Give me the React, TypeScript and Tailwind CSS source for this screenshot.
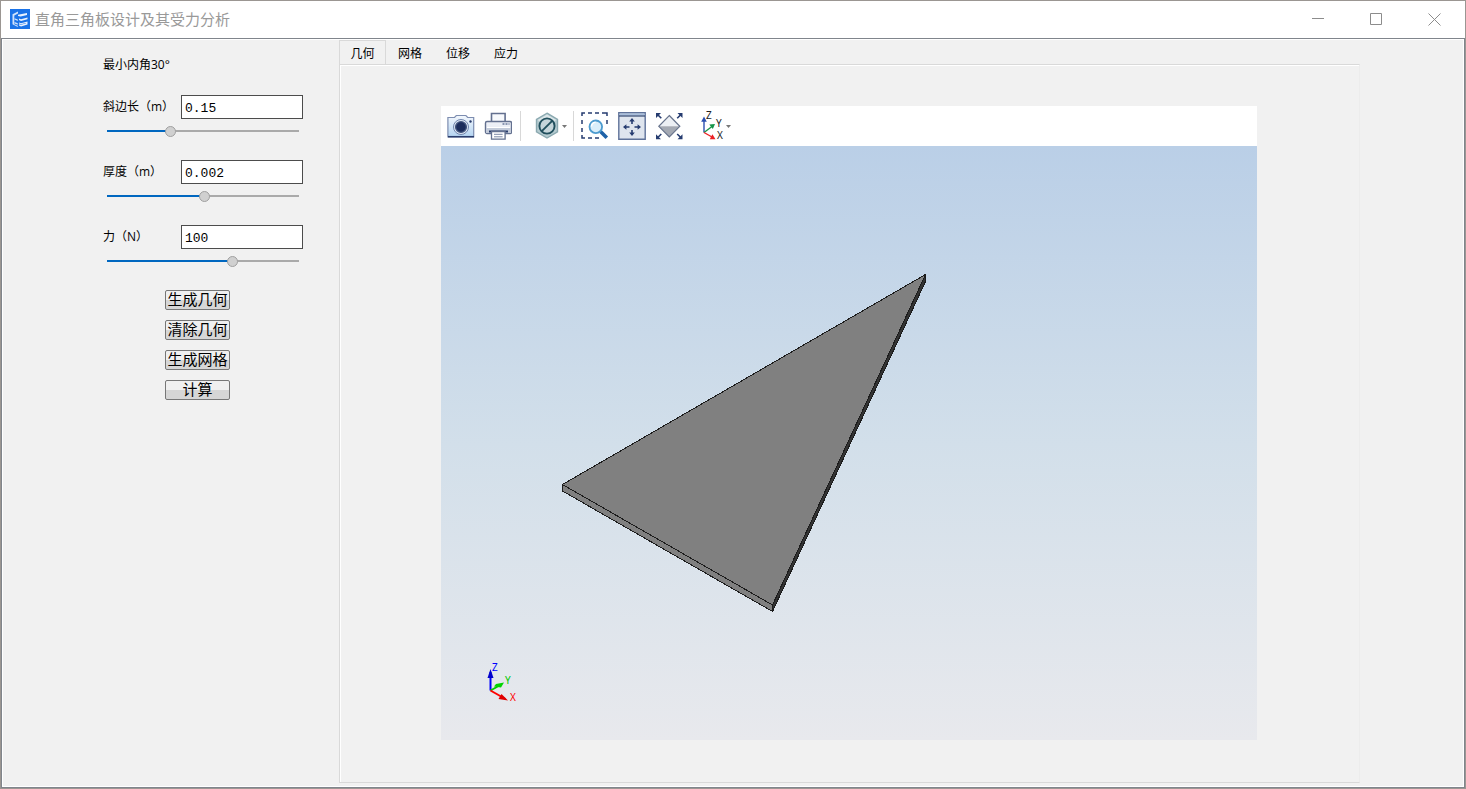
import { useState } from "react";

type Param = {
  id: string;
  label: string;
  value: string;
  min: number;
  max: number;
};

const initialParams: Param[] = [
  { id: "length", label: "斜边长（m）", value: "0.15", min: 0.05, max: 0.36 },
  { id: "thickness", label: "厚度（m）", value: "0.002", min: 0.0005, max: 0.00345 },
  { id: "force", label: "力（N）", value: "100", min: 0, max: 151 },
];

const actions = ["生成几何", "清除几何", "生成网格", "计算"];
const tabs = ["几何", "网格", "位移", "应力"];

function AppLogo() {
  return (
    <svg width="20" height="20" viewBox="0 0 20 20" aria-hidden="true">
      <rect width="20" height="20" fill="#1a73e8" />
      <path d="M2.5 5.2 8 2.4v2.2L4.3 6.4v8.8l3.5 1.6v1.3l-5.3-2.8z" fill="#cfe2fb" />
      <path d="m4.5 9.2 3.3 1.3v1.4l-3.3-1.3zm0 3.8 3.3 1.3v1.4l-3.3-1.3z" fill="#cfe2fb" />
      <path d="m8 5.8 9-1.9v2.2l-6.3 1.5L8 6.9z" fill="#e9f2fe" />
      <path d="m9 9.4 2 .8 6.5-1.7v1.7L11 12l-2-.9zm0 4 2 .8 6.5-1.8v3.2L11 17.4l-2-.9v-1.3l2 .6 4.8-1.3v-.6L11 15.3l-2-.7z" fill="#e9f2fe" />
    </svg>
  );
}

function CameraIcon() {
  return (
    <svg width="28" height="28" viewBox="0 0 28 28" aria-hidden="true">
      <defs>
        <linearGradient id="cameraBody" x1="0" y1="0" x2="0" y2="1">
          <stop offset="0" stopColor="#f4f8fd" />
          <stop offset="1" stopColor="#b3d3f1" />
        </linearGradient>
      </defs>
      <path d="M1.5 5.5h6l1.8-2h9.6l1.8 2h6v19.3H.9V5.5z" fill="url(#cameraBody)" stroke="#7d8db0" strokeWidth="1.2" />
      <path d="M1 24.7h26" stroke="#293c6c" strokeWidth="1.5" />
      <circle cx="14" cy="15" r="7.5" fill="#dfe8f4" stroke="#7185ad" />
      <circle cx="14" cy="15" r="5.4" fill="#1c2d5c" stroke="#44577f" strokeWidth="1.4" />
      <circle cx="23.5" cy="9.5" r="1.2" fill="#293c6c" />
    </svg>
  );
}

function PrinterIcon() {
  return (
    <svg width="28" height="28" viewBox="0 0 28 28" aria-hidden="true">
      <path d="M7.5 10V1.5h13.6V10" fill="#f7f9fc" stroke="#63708f" strokeWidth="1.6" />
      <rect x="1.5" y="9.5" width="26" height="12" rx="1.5" fill="#eceff6" stroke="#63708f" strokeWidth="1.4" />
      <path d="M2 16h25v5H2z" fill="#c3cbda" />
      <path d="M3 15.5h23" stroke="#fff" />
      <path d="M18.5 12h7" stroke="#293c6c" strokeDasharray="2 1" />
      <path d="M5 19.5h19" stroke="#293c6c" strokeWidth="2" />
      <path d="M7.5 19.5h13.6v7.7H7.5z" fill="#fff" stroke="#63708f" strokeWidth="1.3" />
      <path d="M10 22.3h8.6M10 24.8h8.6" stroke="#7c89a5" />
    </svg>
  );
}

function HexagonIcon() {
  return (
    <svg width="28" height="28" viewBox="0 0 28 28" aria-hidden="true">
      <path d="m14 1.2 10.5 6.2v12.4L14 26 3.5 19.8V7.4z" fill="#b5cbd0" stroke="#8ba9b0" strokeWidth="1.4" />
      <path d="m14 2.5 9.4 5.5L14 13.6 4.6 8z" fill="#dbe6e9" />
      <circle cx="14" cy="14" r="7.6" fill="#c5d5da" stroke="#214f5d" strokeWidth="1.9" />
      <path d="m8.8 19.2 10.4-10.4" stroke="#214f5d" strokeWidth="1.9" />
    </svg>
  );
}

function ZoomBoxIcon() {
  return (
    <svg width="28" height="28" viewBox="0 0 28 28" aria-hidden="true">
      <path
        d="M1 4V1h3m3 0h4m3 0h4m3 0h5v3M1 8v4m0 4v4m0 3v3h3m3 0h4m3 0h4M26 8v4"
        fill="none"
        stroke="#263c70"
        strokeWidth="1.5"
      />
      <path d="m19.5 19.5 6.3 6.3" stroke="#1e62a8" strokeWidth="3.6" />
      <circle cx="14.8" cy="14.8" r="6.3" fill="#d9eefa" stroke="#4c9bcf" strokeWidth="1.8" />
      <path d="M10.5 14.5a4.5 4.5 0 0 1 4-4.3" fill="none" stroke="#fff" strokeWidth="1.5" />
    </svg>
  );
}

function FitViewIcon() {
  return (
    <svg width="28" height="28" viewBox="0 0 28 28" aria-hidden="true">
      <path d="M.8.8h26.4v26.4H.8z" fill="#dfe5ee" stroke="#5f7299" strokeWidth="1.4" />
      <path d="M1.5 1.5h25v2h-25z" fill="#a9bedb" />
      <path d="M1 4h26" stroke="#31466f" strokeWidth="1.2" />
      <path d="M14 12V8.5m0 9.5v3.5M11.5 15H8m8.5 0H20" stroke="#263c70" strokeWidth="1.6" />
      <path d="m14 6 2.8 3.4h-5.6zm0 18 2.8-3.4h-5.6zM5 15l3.4-2.8v5.6zm18 0-3.4-2.8v5.6z" fill="#263c70" />
    </svg>
  );
}

function ExtentsIcon() {
  return (
    <svg width="28" height="28" viewBox="0 0 28 28" aria-hidden="true">
      <path d="m14.3 3.5 10.5 10.8H3.8z" fill="#eceff4" />
      <path d="M3.8 14.3h21L14.3 25z" fill="#a4a9b3" />
      <path d="m14.3 3.5 10.5 10.8L14.3 25 3.8 14.3z" fill="none" stroke="#67738c" strokeWidth="1.2" />
      <path d="m2 2 4.3 4.3M26.5 2l-4.3 4.3M2 26.3 6.3 22m20.2 4.3L22.2 22" stroke="#263c70" strokeWidth="1.6" />
      <path d="M1 1h5L1 6zm26.5 0h-5l5 5zM1 27.3h5l-5-5zm26.5 0h-5l5-5z" fill="#263c70" />
    </svg>
  );
}

function AxesIcon() {
  return (
    <svg width="24" height="38" viewBox="0 -3 24 38" aria-hidden="true" className="font-['Noto_Sans',sans-serif] text-[10px]">
      <path d="M3 22.5V10" stroke="#2b4fb0" strokeWidth="1.4" />
      <path d="m3 6.5 2.8 5.2H.2z" fill="#2b4fb0" />
      <path d="m3 22.5 8-6" stroke="#159447" strokeWidth="1.4" />
      <path d="m14 14-2.2 5-3.5-4.5z" fill="#159447" />
      <path d="m3 22.5 8 4.5" stroke="#ed2024" strokeWidth="1.4" />
      <path d="M14.5 29.3H8.8l2.6-5z" fill="#ed2024" />
      <text x="5" y="9" fill="#222">Z</text>
      <text x="15" y="17" fill="#222">Y</text>
      <text x="16" y="29" fill="#222">X</text>
    </svg>
  );
}

function Caret() {
  return (
    <svg width="5" height="3" viewBox="0 0 5 3" aria-hidden="true">
      <path d="M0 0h5L2.5 3z" fill="#777" />
    </svg>
  );
}

function Toolbar() {
  return (
    <div className="flex h-10 items-center bg-white pl-[6px]" role="toolbar">
      <div className="flex gap-[9px]">
        <button type="button" aria-label="截图"><CameraIcon /></button>
        <button type="button" aria-label="打印"><PrinterIcon /></button>
      </div>
      <div className="mx-2 h-[30px] w-px bg-[#d8d8d8]" />
      <button type="button" aria-label="显示" className="ml-1 flex items-center gap-px">
        <HexagonIcon />
        <Caret />
      </button>
      <div className="mr-[7px] ml-[6px] h-[30px] w-px bg-[#d8d8d8]" />
      <div className="flex gap-[9px]">
        <button type="button" aria-label="框选缩放"><ZoomBoxIcon /></button>
        <button type="button" aria-label="适应窗口"><FitViewIcon /></button>
        <button type="button" aria-label="缩放到范围"><ExtentsIcon /></button>
      </div>
      <button type="button" aria-label="视图方向" className="ml-[18px] flex items-center gap-px">
        <AxesIcon />
        <Caret />
      </button>
    </div>
  );
}

function Scene() {
  return (
    <div className="min-h-0 flex-1 bg-linear-to-b from-[#bacfe7] via-[#d2dfea] to-[#e8e9ed]">
      <svg viewBox="0 0 816 594" className="h-full w-full" role="img" aria-label="三角板">
        {/* plate */}
        <g stroke="#1c1c1c" strokeLinejoin="bevel" shapeRendering="crispEdges">
          <path d="M121.5 338.5 331.5 459v6.5L121.5 345z" fill="#808080" />
          <path d="m484.5 128.5-153 330.5v6.5l153-330z" fill="#333" />
          <path d="m121.5 338.5 363-210-153 330.5z" fill="#808080" />
        </g>
        {/* orientation triad */}
        <g strokeWidth="2" className="font-['Noto_Sans',sans-serif] text-[10px]">
          <path d="M49.5 544.5V526" stroke="#00f" />
          <path d="m49.5 523 3 9h-6z" fill="#00c" />
          <path d="m49.5 544.5 9-5" stroke="#0c0" />
          <path d="m63 536.5-3 5-7-1 2-2.5z" fill="#00d400" />
          <path d="m49.5 544.5 15 8.5" stroke="#f00" />
          <path d="m67 554.5-9.5-1.5 3-5z" fill="#e00000" />
          <text x="51" y="525" fill="#00f">Z</text>
          <text x="64" y="538" fill="#00c800">Y</text>
          <text x="69" y="555" fill="#f00">X</text>
        </g>
      </svg>
    </div>
  );
}

export default function App() {
  const [params, setParams] = useState(initialParams);
  const [activeTab, setActiveTab] = useState("几何");

  const updateParam = (id: string, value: string) =>
    setParams((prev) => prev.map((p) => (p.id === id ? { ...p, value } : p)));

  return (
    <div className="flex min-h-screen flex-col border border-[#9b9692] bg-white font-['Open_Sans','Noto_Sans_CJK_SC',sans-serif] text-xs text-black">
      <header className="flex h-[37px] shrink-0 items-center pb-px pl-[9px]">
        <AppLogo />
        <h1 className="ml-[5px] text-[15px] leading-5 text-[#999]">直角三角板设计及其受力分析</h1>
        <div className="mr-[2px] ml-auto flex self-stretch text-[#8c8c8c]">
          <button type="button" aria-label="最小化" className="flex w-[58px] items-center justify-center">
            <svg width="13" height="13" viewBox="0 0 13 13"><path d="M0 5.5h12" stroke="currentColor" /></svg>
          </button>
          <button type="button" aria-label="最大化" className="flex w-[58px] items-center justify-center">
            <svg width="13" height="13" viewBox="0 0 13 13"><path d="M.5.5h11v11H.5z" fill="none" stroke="currentColor" /></svg>
          </button>
          <button type="button" aria-label="关闭" className="flex w-[58px] items-center justify-center">
            <svg width="13" height="13" viewBox="0 0 13 13"><path d="m.5.5 12 12m0-12-12 12" stroke="currentColor" /></svg>
          </button>
        </div>
      </header>

      <div className="flex flex-1 border border-[#80858c]">
        <div className="flex flex-1 border border-white bg-[#f1f1f1]">
          {/* Parameters */}
          <aside className="w-[336px] shrink-0 pt-4 pr-9 pl-[100px]">
            <div className="flex flex-col gap-[21px]">
              <p className="leading-[18px]">最小内角30°</p>

              {params.map((p) => {
                const percent = ((Number(p.value) - p.min) / (p.max - p.min)) * 100;
                return (
                  <div key={p.id} className="flex flex-col gap-1">
                    <div className="flex h-6 items-center">
                      <label htmlFor={p.id} className="w-[78px] shrink-0">{p.label}</label>
                      <input
                        id={p.id}
                        type="text"
                        value={p.value}
                        onChange={(e) => updateParam(p.id, e.target.value)}
                        className="h-6 w-[122px] border border-[#4c4c4c] bg-white px-[3px] pt-[2px] font-['Liberation_Mono',monospace] text-[13px] outline-none"
                      />
                    </div>
                    <div className="flex h-4 w-[200px] items-center px-1">
                      <input
                        type="range"
                        aria-label={p.label}
                        min={p.min}
                        max={p.max}
                        step="any"
                        value={Number(p.value) || p.min}
                        onChange={(e) => updateParam(p.id, String(Number(Number(e.target.value).toPrecision(3))))}
                        style={{ backgroundImage: `linear-gradient(to right, #0067c0 ${percent}%, #aaa ${percent}%)` }}
                        className="h-[2px] w-full appearance-none outline-none [&::-webkit-slider-thumb]:size-[11px] [&::-webkit-slider-thumb]:appearance-none [&::-webkit-slider-thumb]:rounded-full [&::-webkit-slider-thumb]:border [&::-webkit-slider-thumb]:border-[#a0a0a0] [&::-webkit-slider-thumb]:bg-[#d0d0d0]"
                      />
                    </div>
                  </div>
                );
              })}

              <div className="ml-[62px] flex w-[65px] flex-col gap-[10px]">
                {actions.map((action) => (
                  <button
                    key={action}
                    type="button"
                    className="flex h-5 items-center justify-center rounded-xs border border-[#777] bg-linear-to-b from-[#f0f0f0] from-50% to-[#d6d6d6] to-50% pb-[2px] text-[15px] leading-none whitespace-nowrap"
                  >
                    {action}
                  </button>
                ))}
              </div>
            </div>
          </aside>

          {/* Results */}
          <main className="mr-[103px] mb-[3px] flex min-w-0 flex-1 flex-col">
            <div className="flex h-6" role="tablist">
              {tabs.map((tab) => (
                <button
                  key={tab}
                  type="button"
                  role="tab"
                  aria-selected={tab === activeTab}
                  onClick={() => setActiveTab(tab)}
                  className={
                    tab === activeTab
                      ? "w-[47px] border border-b-0 border-[#d9d9d9] pt-[3px]"
                      : "w-12 pt-1"
                  }
                >
                  {tab}
                </button>
              ))}
            </div>
            <section className="flex flex-1 border border-t-[#d9d9d9] border-r-[#ececec] border-b-[#d9d9d9] border-l-[#d9d9d9]">
              <div className="flex flex-1 border-t border-l border-white pt-10 pr-[102px] pb-[42px] pl-[100px]">
                <div className="flex min-w-0 flex-1 flex-col">
                  <Toolbar />
                  <Scene />
                </div>
              </div>
            </section>
          </main>
        </div>
      </div>
    </div>
  );
}
